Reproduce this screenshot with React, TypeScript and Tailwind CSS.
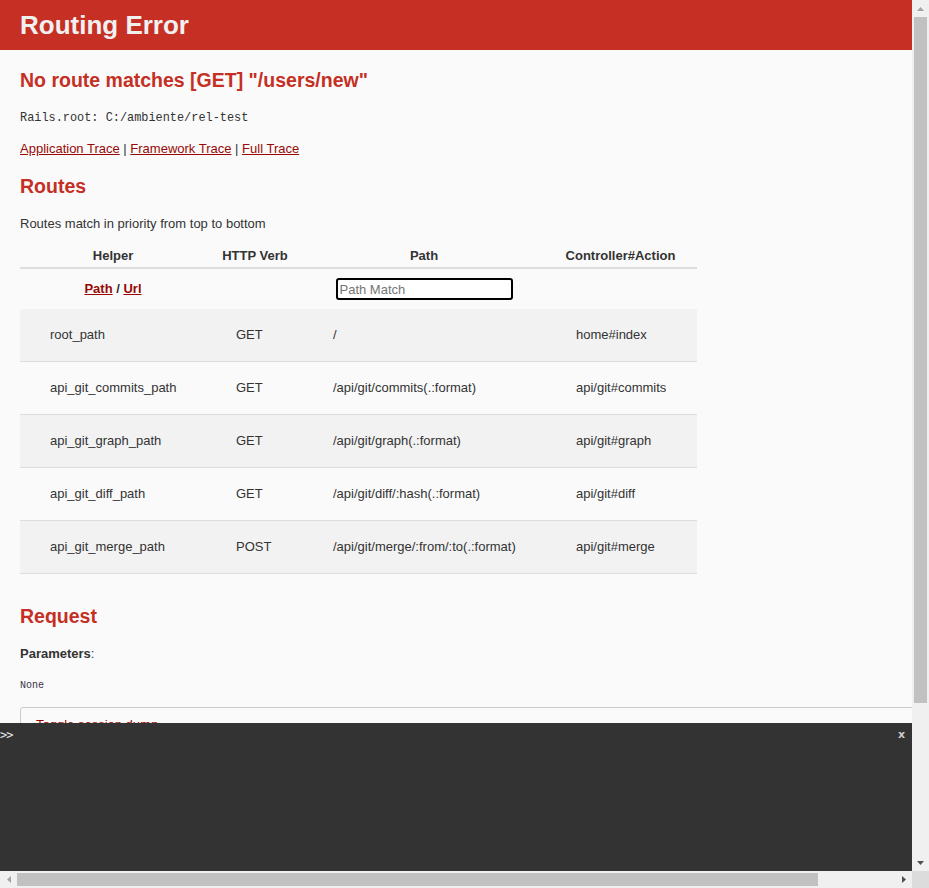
import React from 'react';

const routes = [
  { helper: 'root_path', verb: 'GET', path: '/', action: 'home#index' },
  { helper: 'api_git_commits_path', verb: 'GET', path: '/api/git/commits(.:format)', action: 'api/git#commits' },
  { helper: 'api_git_graph_path', verb: 'GET', path: '/api/git/graph(.:format)', action: 'api/git#graph' },
  { helper: 'api_git_diff_path', verb: 'GET', path: '/api/git/diff/:hash(.:format)', action: 'api/git#diff' },
  { helper: 'api_git_merge_path', verb: 'POST', path: '/api/git/merge/:from/:to(.:format)', action: 'api/git#merge' },
];

const cols = 'grid grid-cols-[186px_98px_240px_153px]';

export default function App() {
  return (
    <div className="w-[929px] h-[888px] flex flex-col overflow-hidden bg-[#fafafa] text-[#333] text-[13px] leading-[18px] font-['Liberation_Sans',Arial,sans-serif]">
      <div className="flex flex-1 min-h-0">
        <div className="w-[912px] flex flex-col min-h-0">
          {/* Page content */}
          <div className="flex-1 min-h-0 overflow-hidden">
            <header className="h-[50px] bg-[#c52f24] text-[#f0f0f0] pl-5 flex items-center">
              <h1 className="text-[26px] font-bold leading-[29px]">Routing Error</h1>
            </header>

            <div className="pl-5">
              <h2 className="mt-[18px] text-[19.5px] leading-[25px] font-bold text-[#c52f24]">
                No route matches [GET] "/users/new"
              </h2>
              <p className="mt-4 font-['Liberation_Mono',monospace] text-[11.9px] leading-[18px]">
                Rails.root: C:/ambiente/rel-test
              </p>
              <p className="mt-[13px]">
                <a className="text-[#980905] underline">Application Trace</a>
                {' | '}
                <a className="text-[#980905] underline">Framework Trace</a>
                {' | '}
                <a className="text-[#980905] underline">Full Trace</a>
              </p>

              <h2 className="mt-4 text-[19.5px] leading-[25px] font-bold text-[#c52f24]">Routes</h2>
              <p className="mt-4">Routes match in priority from top to bottom</p>

              {/* Routes table */}
              <div className="mt-[13px] w-[677px]">
                <div className={`${cols} h-[23px] items-center pb-[2px] font-bold text-center border-b-2 border-[#dddddd]`}>
                  <div>Helper</div>
                  <div>HTTP Verb</div>
                  <div>Path</div>
                  <div>Controller#Action</div>
                </div>
                <div className={`${cols} h-[40px] items-center`}>
                  <div className="text-center font-bold">
                    <a className="text-[#980905] underline">Path</a> / <a className="text-[#980905] underline">Url</a>
                  </div>
                  <div />
                  <div className="flex justify-center">
                    <input
                      placeholder="Path Match"
                      className="w-[177px] h-[22px] bg-white border-2 border-black rounded-[3px] px-[2px] text-[13px] placeholder:text-[#757575] outline-none"
                    />
                  </div>
                  <div />
                </div>
                {routes.map((r, i) => (
                  <div
                    key={r.helper}
                    className={`${cols} h-[53px] items-center border-b border-[#dddddd] ${i % 2 === 0 ? 'bg-[#f2f2f2]' : ''}`}
                  >
                    <div className="pl-[30px]">{r.helper}</div>
                    <div className="pl-[30px]">{r.verb}</div>
                    <div className="pl-[29px] whitespace-nowrap">{r.path}</div>
                    <div className="pl-[32px] whitespace-nowrap">{r.action}</div>
                  </div>
                ))}
              </div>

              <h2 className="mt-[30px] text-[19.5px] leading-[25px] font-bold text-[#c52f24]">Request</h2>
              <p className="mt-4">
                <b>Parameters</b>:
              </p>
              <pre className="mt-4 font-['Liberation_Mono',monospace] text-[10px] leading-[14px] text-[#3b3346]">None</pre>

              <div className="mt-[14px] w-[960px] h-[60px] border border-[#cccccc] rounded-[3px] pt-[8px] pl-[15px]">
                <a className="text-[#980905] underline">Toggle session dump</a>
              </div>
            </div>
          </div>

          {/* Web console */}
          <div className="h-[148px] bg-[#333333] flex justify-between items-start pt-[6px]">
            <span className="text-[#e6e6e6] font-['DejaVu_Sans_Mono',monospace] text-[12px] leading-[13px] tracking-[-1px]">&gt;&gt;</span>
            <span className="text-[#cccccc] font-['DejaVu_Sans',sans-serif] font-bold text-[11px] leading-[12px] mr-[7px]">x</span>
          </div>
        </div>

        {/* Vertical scrollbar */}
        <div className="w-[17px] bg-[#f0f0f0] flex flex-col items-center">
          <div className="h-[17px] flex items-center justify-center">
            <svg width="7" height="4" viewBox="0 0 7 4"><path d="M3.5 0 L7 4 L0 4 Z" fill="#a3a3a3" /></svg>
          </div>
          <div className="w-[13px] h-[686px] bg-[#c1c1c1]" />
          <div className="flex-1" />
          <div className="h-[17px] flex items-center justify-center">
            <svg width="7" height="4" viewBox="0 0 7 4"><path d="M0 0 L7 0 L3.5 4 Z" fill="#505050" /></svg>
          </div>
        </div>
      </div>

      {/* Horizontal scrollbar */}
      <div className="h-[17px] flex">
        <div className="w-[912px] bg-[#f0f0f0] flex items-center">
          <div className="w-[17px] flex items-center justify-center">
            <svg width="4" height="7" viewBox="0 0 4 7"><path d="M4 0 L4 7 L0 3.5 Z" fill="#a3a3a3" /></svg>
          </div>
          <div className="w-[801px] h-[13px] bg-[#c1c1c1]" />
          <div className="flex-1" />
          <div className="w-[17px] flex items-center justify-center">
            <svg width="4" height="7" viewBox="0 0 4 7"><path d="M0 0 L4 3.5 L0 7 Z" fill="#505050" /></svg>
          </div>
        </div>
        <div className="w-[17px] bg-[#dcdcdc]" />
      </div>
    </div>
  );
}
